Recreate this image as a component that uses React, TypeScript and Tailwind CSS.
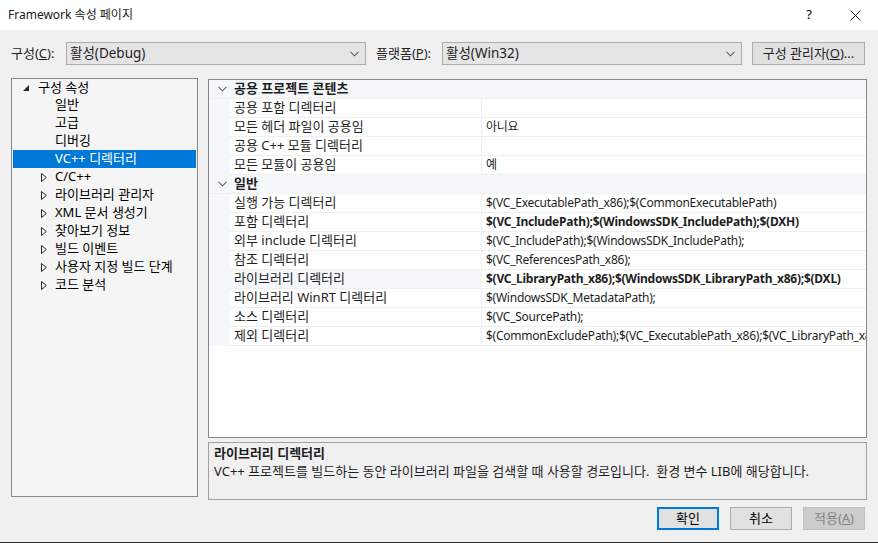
import React from 'react';

const FONT = { fontFamily: '"Noto Sans", "Noto Sans CJK KR", sans-serif' };

type Row = { name: string; value: string; bold?: boolean; sel?: boolean };

const SECTIONS: { title: string; rows: Row[] }[] = [
  {
    title: '공용 프로젝트 콘텐츠',
    rows: [
      { name: '공용 포함 디렉터리', value: '' },
      { name: '모든 헤더 파일이 공용임', value: '아니요' },
      { name: '공용 C++ 모듈 디렉터리', value: '' },
      { name: '모든 모듈이 공용임', value: '예' },
    ],
  },
  {
    title: '일반',
    rows: [
      { name: '실행 가능 디렉터리', value: '$(VC_ExecutablePath_x86);$(CommonExecutablePath)' },
      { name: '포함 디렉터리', value: '$(VC_IncludePath);$(WindowsSDK_IncludePath);$(DXH)', bold: true },
      { name: '외부 include 디렉터리', value: '$(VC_IncludePath);$(WindowsSDK_IncludePath);' },
      { name: '참조 디렉터리', value: '$(VC_ReferencesPath_x86);' },
      { name: '라이브러리 디렉터리', value: '$(VC_LibraryPath_x86);$(WindowsSDK_LibraryPath_x86);$(DXL)', bold: true, sel: true },
      { name: '라이브러리 WinRT 디렉터리', value: '$(WindowsSDK_MetadataPath);' },
      { name: '소스 디렉터리', value: '$(VC_SourcePath);' },
      { name: '제외 디렉터리', value: '$(CommonExcludePath);$(VC_ExecutablePath_x86);$(VC_LibraryPath_x86)' },
    ],
  },
];

const TREE: { label: string; kind: 'leaf' | 'closed'; sel?: boolean }[] = [
  { label: '일반', kind: 'leaf' },
  { label: '고급', kind: 'leaf' },
  { label: '디버깅', kind: 'leaf' },
  { label: 'VC++ 디렉터리', kind: 'leaf', sel: true },
  { label: 'C/C++', kind: 'closed' },
  { label: '라이브러리 관리자', kind: 'closed' },
  { label: 'XML 문서 생성기', kind: 'closed' },
  { label: '찾아보기 정보', kind: 'closed' },
  { label: '빌드 이벤트', kind: 'closed' },
  { label: '사용자 지정 빌드 단계', kind: 'closed' },
  { label: '코드 분석', kind: 'closed' },
];

function Chevron() {
  return (
    <svg width="9" height="6" viewBox="0 0 9 6" className="shrink-0">
      <path d="M0.5 0.8 L4.5 4.8 L8.5 0.8" fill="none" stroke="#606060" strokeWidth="1.1" />
    </svg>
  );
}

function Combo({ text, w }: { text: string; w: string }) {
  return (
    <div className={`${w} h-[23px] bg-[#e5e5e5] border border-[#adadad] flex items-center pl-[3px] pr-[6px]`}>
      <span className="flex-1 text-[13.5px] text-[#1e1e1e]">{text}</span>
      <Chevron />
    </div>
  );
}

function Tri({ kind }: { kind: 'open' | 'closed' }) {
  if (kind === 'open')
    return (
      <svg width="6" height="6" viewBox="0 0 6 6">
        <path d="M6 0 L6 6 L0 6 Z" fill="#262626" />
      </svg>
    );
  return (
    <svg width="6" height="9" viewBox="0 0 6 9">
      <path d="M0.5 0.5 L5.3 4.5 L0.5 8.5 Z" fill="none" stroke="#262626" strokeWidth="1" />
    </svg>
  );
}

export default function App() {
  return (
    <div style={FONT} className="w-[878px] h-[543px] bg-[#f0f0f0] flex flex-col text-[12px] text-black border-b border-[#2b2b2b] overflow-hidden">
      {/* title */}
      <div className="h-[30px] bg-white flex items-center pl-[8px] shrink-0">
        <span className="flex-1 text-[12px] text-[#1a1a1a]">Framework 속성 페이지</span>
        <span className="w-[46px] text-center text-[13px]">?</span>
        <span className="w-[46px] flex justify-center">
          <svg width="11" height="11" viewBox="0 0 11 11">
            <path d="M0.5 0.5 L10.5 10.5 M10.5 0.5 L0.5 10.5" stroke="#1a1a1a" strokeWidth="1" />
          </svg>
        </span>
      </div>

      {/* config bar */}
      <div className="flex items-center mt-[12px] pl-[11px] h-[23px] shrink-0">
        <span className="w-[55px] text-[13px] text-[#1e1e1e]">
          구성(<span className="underline">C</span>):
        </span>
        <Combo text="활성(Debug)" w="w-[300px]" />
        <span className="ml-[10px] w-[66px] text-[13px] text-[#1e1e1e]">
          플랫폼(<span className="underline">P</span>):
        </span>
        <Combo text="활성(Win32)" w="w-[300px]" />
        <div className="ml-[10px] w-[113px] h-[23px] bg-[#e1e1e1] border border-[#adadad] flex items-center justify-center text-[13px] text-[#1e1e1e]">
          구성 관리자(<span className="underline">O</span>)...
        </div>
      </div>

      {/* main */}
      <div className="flex mt-[13px] pl-[11px] gap-[10px] shrink-0">
        {/* tree */}
        <div className="w-[187px] h-[419px] border border-[#828790] bg-[#f5f5f5] px-[1px]">
          <div className="h-[17px] flex items-center pl-[10px] gap-[9px] text-[13px]">
            <Tri kind="open" />
            <span>구성 속성</span>
          </div>
          {TREE.map((t) => (
            <div
              key={t.label}
              className={`h-[18px] flex items-center text-[13px] ${t.sel ? 'bg-[#0078d7] text-white' : ''}`}
            >
              <span className="w-[42px] flex justify-end pr-[8px]">
                {t.kind === 'closed' && <Tri kind="closed" />}
              </span>
              <span>{t.label}</span>
            </div>
          ))}
        </div>

        {/* right */}
        <div className="w-[659px] flex flex-col">
          <div className="mt-[1px] h-[359px] border border-[#828790] bg-white overflow-hidden">
            {SECTIONS.map((s) => (
              <div key={s.title}>
                <div className="h-[19px] bg-[#f5f7fb] flex items-center border-b border-[#f0f0f0]">
                  <span className="w-[25px] flex justify-center pl-[2px]">
                    <Chevron />
                  </span>
                  <span className="font-bold text-[13px] text-[#1e1e1e]">{s.title}</span>
                </div>
                {s.rows.map((r) => (
                  <div key={r.name} className="h-[19px] flex bg-[#f5f7fb]">
                    <div
                      className={`ml-[21px] w-[252px] flex items-center pl-[4px] border-b border-r border-[#f0f0f0] whitespace-nowrap text-[13px] text-[#1e1e1e] ${r.sel ? 'bg-[#f5f7fb]' : 'bg-white'}`}
                    >
                      {r.name}
                    </div>
                    <div
                      className={`flex-1 bg-white flex items-center pl-[4px] border-b border-[#f0f0f0] whitespace-nowrap overflow-hidden text-[12px] tracking-[-0.25px] text-[#1e1e1e] ${r.bold ? 'font-bold' : ''}`}
                    >
                      {r.value}
                    </div>
                  </div>
                ))}
              </div>
            ))}
          </div>

          <div className="mt-[4px] h-[58px] border border-[#a0a0a0] bg-[#f0f0f0] px-[5px] pt-[1px]">
            <div className="font-bold text-[13px] leading-[18px] text-[#1e1e1e]">라이브러리 디렉터리</div>
            <div className="text-[13px] leading-[18px] text-[#1e1e1e]">
              VC++ 프로젝트를 빌드하는 동안 라이브러리 파일을 검색할 때 사용할 경로입니다.&nbsp; 환경 변수 LIB에 해당합니다.
            </div>
          </div>
        </div>
      </div>

      {/* buttons */}
      <div className="flex justify-end gap-[11px] pr-[13px] mt-[7px] shrink-0">
        <div className="w-[62px] h-[23px] border-2 border-[#0078d7] bg-[#e1e1e1] flex items-center justify-center text-[13px]">
          확인
        </div>
        <div className="w-[62px] h-[23px] border border-[#adadad] bg-[#e1e1e1] flex items-center justify-center text-[13px]">
          취소
        </div>
        <div className="w-[62px] h-[23px] border border-[#bfbfbf] bg-[#cccccc] flex items-center justify-center text-[13px] text-[#838383]">
          적용(<span className="underline">A</span>)
        </div>
      </div>
    </div>
  );
}
